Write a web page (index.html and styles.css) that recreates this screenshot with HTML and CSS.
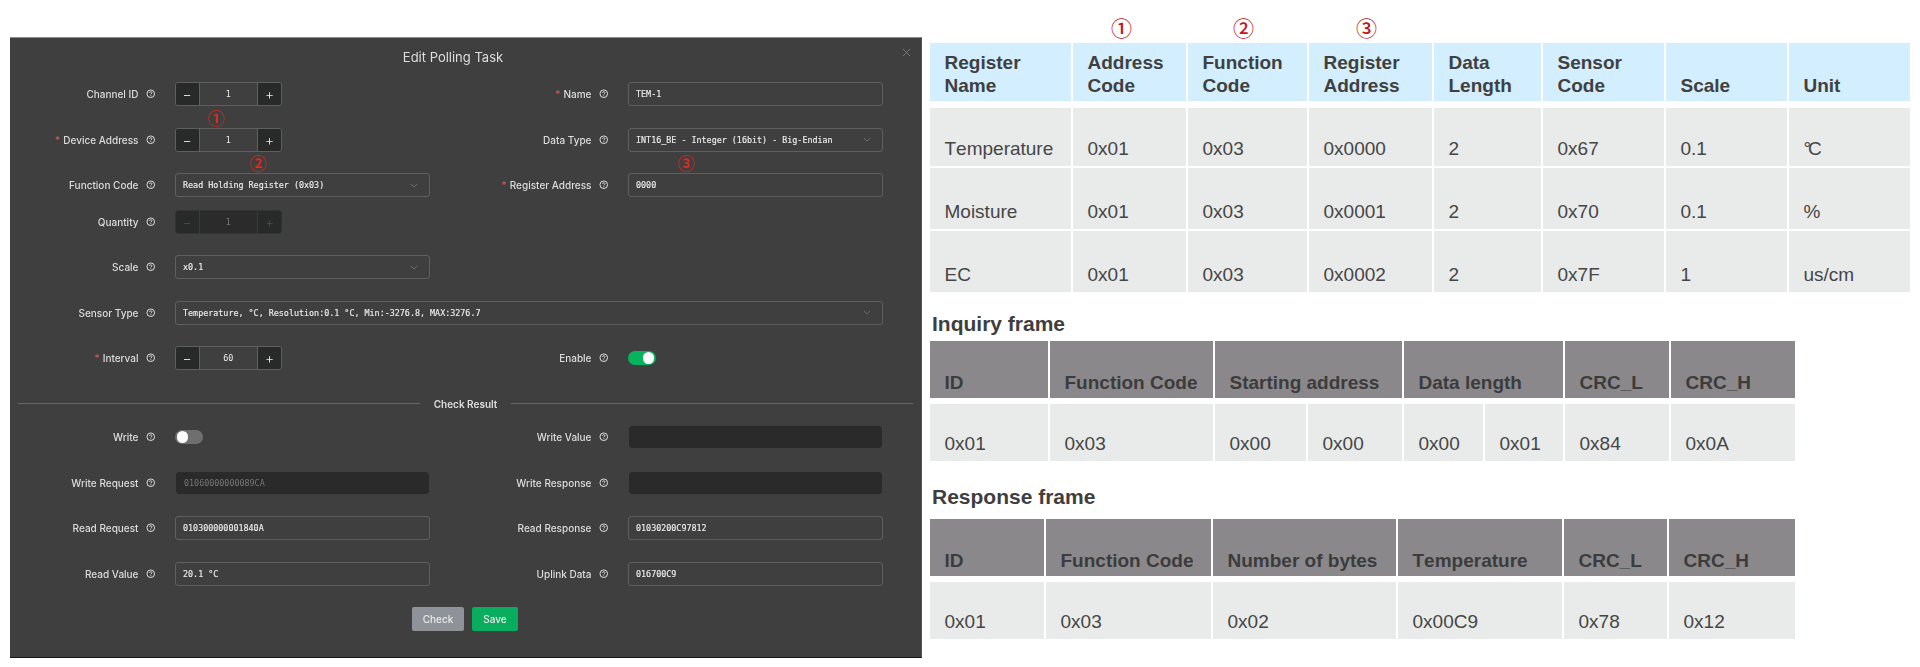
FILE: index.html
```html
<!DOCTYPE html>
<html lang="en">
<head>
<meta charset="utf-8">
<title>Edit Polling Task</title>
<link rel="stylesheet" href="styles.css">
</head>
<body>
<svg class="defs" width="0" height="0" aria-hidden="true">
  <symbol id="help" viewBox="0 0 10 10">
    <circle cx="5" cy="5" r="4" fill="none" stroke="currentColor" stroke-width="1"/>
    <path d="M3.7 4.1C3.7 3.3 4.3 2.9 5 2.9C5.8 2.9 6.3 3.4 6.3 4C6.3 4.8 5.2 4.9 5.1 5.8" fill="none" stroke="currentColor" stroke-width=".9"/>
    <circle cx="5.1" cy="7" r=".55" fill="currentColor"/>
  </symbol>
</svg>
<main class="page">
  <section class="dialog">
    <header class="dialog-title">Edit Polling Task</header>
    <svg class="close" viewBox="0 0 10 10" aria-hidden="true"><path d="M1 1L9 9M9 1L1 9" stroke="currentColor" stroke-width="1" fill="none"/></svg>
    <span class="mark mark-a">①</span>
    <span class="mark mark-b">②</span>
    <span class="mark mark-c">③</span>
    <form class="form">
      <div class="row">
        <div class="field"><label class="label">Channel ID<svg class="help"><use href="#help"/></svg></label>
          <div class="stepper"><span class="step">−</span><span class="step-value">1</span><span class="step">+</span></div></div>
        <div class="field"><label class="label"><i>*</i>Name<svg class="help"><use href="#help"/></svg></label>
          <div class="input">TEM-1</div></div>
      </div>
      <div class="row">
        <div class="field"><label class="label"><i>*</i>Device Address<svg class="help"><use href="#help"/></svg></label>
          <div class="stepper"><span class="step">−</span><span class="step-value">1</span><span class="step">+</span></div></div>
        <div class="field"><label class="label">Data Type<svg class="help"><use href="#help"/></svg></label>
          <div class="input select">INT16_BE - Integer (16bit) - Big-Endian<svg class="chev" viewBox="0 0 10 6"><path d="M1 1L5 5L9 1" fill="none" stroke="currentColor"/></svg></div></div>
      </div>
      <div class="row">
        <div class="field"><label class="label">Function Code<svg class="help"><use href="#help"/></svg></label>
          <div class="input select">Read Holding Register (0x03)<svg class="chev" viewBox="0 0 10 6"><path d="M1 1L5 5L9 1" fill="none" stroke="currentColor"/></svg></div></div>
        <div class="field"><label class="label"><i>*</i>Register Address<svg class="help"><use href="#help"/></svg></label>
          <div class="input">0000</div></div>
      </div>
      <div class="row row-tight">
        <div class="field"><label class="label">Quantity<svg class="help"><use href="#help"/></svg></label>
          <div class="stepper stepper-off"><span class="step">−</span><span class="step-value">1</span><span class="step">+</span></div></div>
      </div>
      <div class="row">
        <div class="field"><label class="label">Scale<svg class="help"><use href="#help"/></svg></label>
          <div class="input select">x0.1<svg class="chev" viewBox="0 0 10 6"><path d="M1 1L5 5L9 1" fill="none" stroke="currentColor"/></svg></div></div>
      </div>
      <div class="row">
        <div class="field field-wide"><label class="label">Sensor Type<svg class="help"><use href="#help"/></svg></label>
          <div class="input select">Temperature, °C, Resolution:0.1 °C, Min:-3276.8, MAX:3276.7<svg class="chev" viewBox="0 0 10 6"><path d="M1 1L5 5L9 1" fill="none" stroke="currentColor"/></svg></div></div>
      </div>
      <div class="row">
        <div class="field"><label class="label"><i>*</i>Interval<svg class="help"><use href="#help"/></svg></label>
          <div class="stepper"><span class="step">−</span><span class="step-value">60</span><span class="step">+</span></div></div>
        <div class="field"><label class="label">Enable<svg class="help"><use href="#help"/></svg></label>
          <div class="control-cell"><span class="switch switch-on"><b></b></span></div></div>
      </div>
      <div class="divider"><span>Check Result</span></div>
      <div class="row">
        <div class="field"><label class="label">Write<svg class="help"><use href="#help"/></svg></label>
          <div class="control-cell"><span class="switch"><b></b></span></div></div>
        <div class="field"><label class="label">Write Value<svg class="help"><use href="#help"/></svg></label>
          <div class="input input-off"></div></div>
      </div>
      <div class="row">
        <div class="field"><label class="label">Write Request<svg class="help"><use href="#help"/></svg></label>
          <div class="input input-off">01060000000089CA</div></div>
        <div class="field"><label class="label">Write Response<svg class="help"><use href="#help"/></svg></label>
          <div class="input input-off"></div></div>
      </div>
      <div class="row">
        <div class="field"><label class="label">Read Request<svg class="help"><use href="#help"/></svg></label>
          <div class="input">010300000001840A</div></div>
        <div class="field"><label class="label">Read Response<svg class="help"><use href="#help"/></svg></label>
          <div class="input">01030200C97812</div></div>
      </div>
      <div class="row">
        <div class="field"><label class="label">Read Value<svg class="help"><use href="#help"/></svg></label>
          <div class="input">20.1 °C</div></div>
        <div class="field"><label class="label">Uplink Data<svg class="help"><use href="#help"/></svg></label>
          <div class="input">016700C9</div></div>
      </div>
      <div class="actions">
        <span class="btn btn-check">Check</span>
        <span class="btn btn-save">Save</span>
      </div>
    </form>
  </section>

  <section class="docs">
    <span class="ref ref-a">①</span>
    <span class="ref ref-b">②</span>
    <span class="ref ref-c">③</span>
    <table class="sheet sheet-registers">
      <colgroup><col class="w141"><col class="w113"><col class="w119"><col class="w123"><col class="w107"><col class="w121"><col class="w121"><col class="w121"></colgroup>
      <thead><tr><th>Register<br>Name</th><th>Address<br>Code</th><th>Function<br>Code</th><th>Register<br>Address</th><th>Data<br>Length</th><th>Sensor<br>Code</th><th>Scale</th><th>Unit</th></tr></thead>
      <tbody>
        <tr class="first"><td>Temperature</td><td>0x01</td><td>0x03</td><td>0x0000</td><td>2</td><td>0x67</td><td>0.1</td><td class="degrees">°C</td></tr>
        <tr><td>Moisture</td><td>0x01</td><td>0x03</td><td>0x0001</td><td>2</td><td>0x70</td><td>0.1</td><td>%</td></tr>
        <tr><td>EC</td><td>0x01</td><td>0x03</td><td>0x0002</td><td>2</td><td>0x7F</td><td>1</td><td>us/cm</td></tr>
      </tbody>
    </table>
    <h2 class="frame-title">Inquiry frame</h2>
    <table class="sheet sheet-frame">
      <colgroup><col class="w118"><col class="w163"><col class="w91"><col class="w94"><col class="w79"><col class="w78"><col class="w104"><col class="w124"></colgroup>
      <thead><tr><th>ID</th><th>Function Code</th><th colspan="2">Starting address</th><th colspan="2">Data length</th><th>CRC_L</th><th>CRC_H</th></tr></thead>
      <tbody><tr class="first"><td>0x01</td><td>0x03</td><td>0x00</td><td>0x00</td><td>0x00</td><td>0x01</td><td>0x84</td><td>0x0A</td></tr></tbody>
    </table>
    <h2 class="frame-title frame-title-second">Response frame</h2>
    <table class="sheet sheet-frame">
      <colgroup><col class="w114"><col class="w165"><col class="w183"><col class="w164"><col class="w103"><col class="w126"></colgroup>
      <thead><tr><th>ID</th><th>Function Code</th><th>Number of bytes</th><th>Temperature</th><th>CRC_L</th><th>CRC_H</th></tr></thead>
      <tbody><tr class="first"><td>0x01</td><td>0x03</td><td>0x02</td><td>0x00C9</td><td>0x78</td><td>0x12</td></tr></tbody>
    </table>
  </section>
</main>
</body>
</html>
```

FILE: styles.css
```css
* { box-sizing: border-box; }
html, body { margin: 0; height: 667px; background: #fff; overflow: hidden; }
.defs { position: absolute; }
.page { display: flex; align-items: flex-start; width: 1920px; height: 667px; padding-left: 10px; }

/* dialog */
.dialog {
  position: relative;
  flex: 0 0 912px;
  height: 621px;
  margin-top: 37px;
  background: #3f3f3f;
  border-top: 1px solid #8d8d8d;
  border-right: 1px solid #555;
  border-bottom: 1px solid #161616;
  color: #dcdcdc;
  font: 500 10px/14px Inter, "Liberation Sans", sans-serif;
  filter: blur(.4px);
}
.dialog-title { height: 44px; padding: 11px 25px 0 0; text-align: center; font-size: 13px; font-weight: 400; line-height: 16px; color: #dedede; }
.close { position: absolute; top: 10px; right: 10px; width: 9px; height: 9px; color: #7e7e7e; }
.mark { position: absolute; font: 700 17px/18px "Noto Sans CJK SC", sans-serif; color: #e0291f; }
.mark-a { left: 198px; top: 71px; }
.mark-b { left: 240px; top: 116px; }
.mark-c { left: 668px; top: 116px; }

.form { display: flex; flex-direction: column; gap: 21.5px; }
.row { display: grid; grid-template-columns: 420px 453px; height: 24px; }
.row-tight { margin-top: -9px; }
.field { display: grid; grid-template-columns: 1fr 255.5px; align-items: center; }
.field-wide { grid-column: 1 / span 2; grid-template-columns: 164.5px 708.5px; }
.label { display: flex; justify-content: flex-end; align-items: center; padding-right: 19px; white-space: nowrap; }
.label i { margin-right: 3px; font-style: normal; color: #d8544c; }
.help { width: 9.5px; height: 9.5px; margin-left: 7.5px; color: #e6e6e6; }

.input {
  display: flex; align-items: center; justify-content: space-between;
  height: 24px; padding: 0 7.5px;
  border: 1px solid #5f5f5f; border-radius: 3px;
  font: 8.4px/14px "DejaVu Sans Mono", monospace; color: #ececec;
  -webkit-text-stroke: .15px #ececec;
  white-space: pre;
}
.input-off { margin: 0 1px; height: 22px; background: #292a29; border-color: #292a29; color: #777; -webkit-text-stroke: 0; }
.select { padding-right: 11px; }
.chev { width: 8px; height: 5px; color: #7a7a7a; }
.control-cell { display: flex; align-items: center; }

.stepper { display: flex; width: 107.5px; height: 24px; border: 1px solid #5f5f5f; border-radius: 3px; overflow: hidden; font: 8.4px/14px "DejaVu Sans Mono", monospace; color: #ececec; }
.step { flex: 0 0 23px; display: flex; align-items: center; justify-content: center; background: #282a29; font: 300 14px/14px Inter, sans-serif; }
.step-value { flex: 1; display: flex; align-items: center; justify-content: center; border-left: 1px solid #5f5f5f; border-right: 1px solid #5f5f5f; }
.stepper-off { border-color: #333; color: #777; }
.stepper-off .step { color: #4c4c4c; }
.stepper-off .step-value { background: #2a2b2a; border-color: #3a3a3a; }

.switch { display: block; position: relative; width: 28.5px; height: 14.5px; border-radius: 8px; background: #6f6f6f; }
.switch b { position: absolute; left: 2px; top: 1.5px; width: 11.5px; height: 11.5px; border-radius: 50%; background: #fff; }
.switch-on { background: #07b35c; }
.switch-on b { left: 15px; }

.divider { display: flex; align-items: center; gap: 14px; height: 12px; margin: 6px 8px -6px; font-weight: 600; color: #dedede; }
.divider::before, .divider::after { content: ""; flex: 1; height: 1px; background: #666; }

.actions { display: flex; justify-content: center; gap: 8px; height: 24px; padding-right: 1px; }
.btn { display: flex; align-items: center; justify-content: center; height: 24px; border-radius: 2px; color: #e9e9e9; }
.btn-check { width: 52px; background: #8f9298; }
.btn-save { width: 46px; background: #08ad5d; }

/* documentation tables */
.docs { position: relative; margin-left: 6px; padding-top: 41px; font-family: "Liberation Sans", Arial, sans-serif; font-kerning: none; color: #444; }
.ref { position: absolute; top: 14px; font: 500 21px/26px "Noto Sans CJK SC", sans-serif; color: #c4141c; }
.ref-a { left: 183px; }
.ref-b { left: 305px; }
.ref-c { left: 428px; }

.sheet { border-collapse: separate; border-spacing: 2px; table-layout: fixed; font-size: 19px; line-height: 23px; }
.sheet th, .sheet td { padding: 0 0 4px 14.5px; text-align: left; vertical-align: bottom; }
.sheet th { height: 57px; font-weight: 700; color: #404040; }
.sheet td { height: 61px; padding-bottom: 6px; background: #e9eaea; color: #464646; }
.sheet .first td { height: 61px; border-top: 4px solid #fff; background-clip: padding-box; }
.sheet .first td.degrees { letter-spacing: -3px; }
.sheet-registers th { height: 58px; background: #d3eefe; }
.sheet-registers .first td { height: 63px; border-top-width: 5px; }
.sheet-frame th { background: #8b888b; color: #3c3c3c; }

.frame-title { margin: 18px 0 3px 4px; font-size: 21px; line-height: 24px; font-weight: 700; color: #3e3e3e; }
.frame-title-second { margin-top: 22px; margin-bottom: 8px; }

.w79 { width: 79px; } .w78 { width: 78px; } .w91 { width: 91px; } .w94 { width: 94px; }
.w103 { width: 103px; } .w104 { width: 104px; } .w107 { width: 107px; } .w113 { width: 113px; }
.w114 { width: 114px; } .w118 { width: 118px; } .w119 { width: 119px; } .w121 { width: 121px; }
.w123 { width: 123px; } .w124 { width: 124px; } .w126 { width: 126px; } .w141 { width: 141px; }
.w163 { width: 163px; } .w164 { width: 164px; } .w165 { width: 165px; } .w183 { width: 183px; }
```
